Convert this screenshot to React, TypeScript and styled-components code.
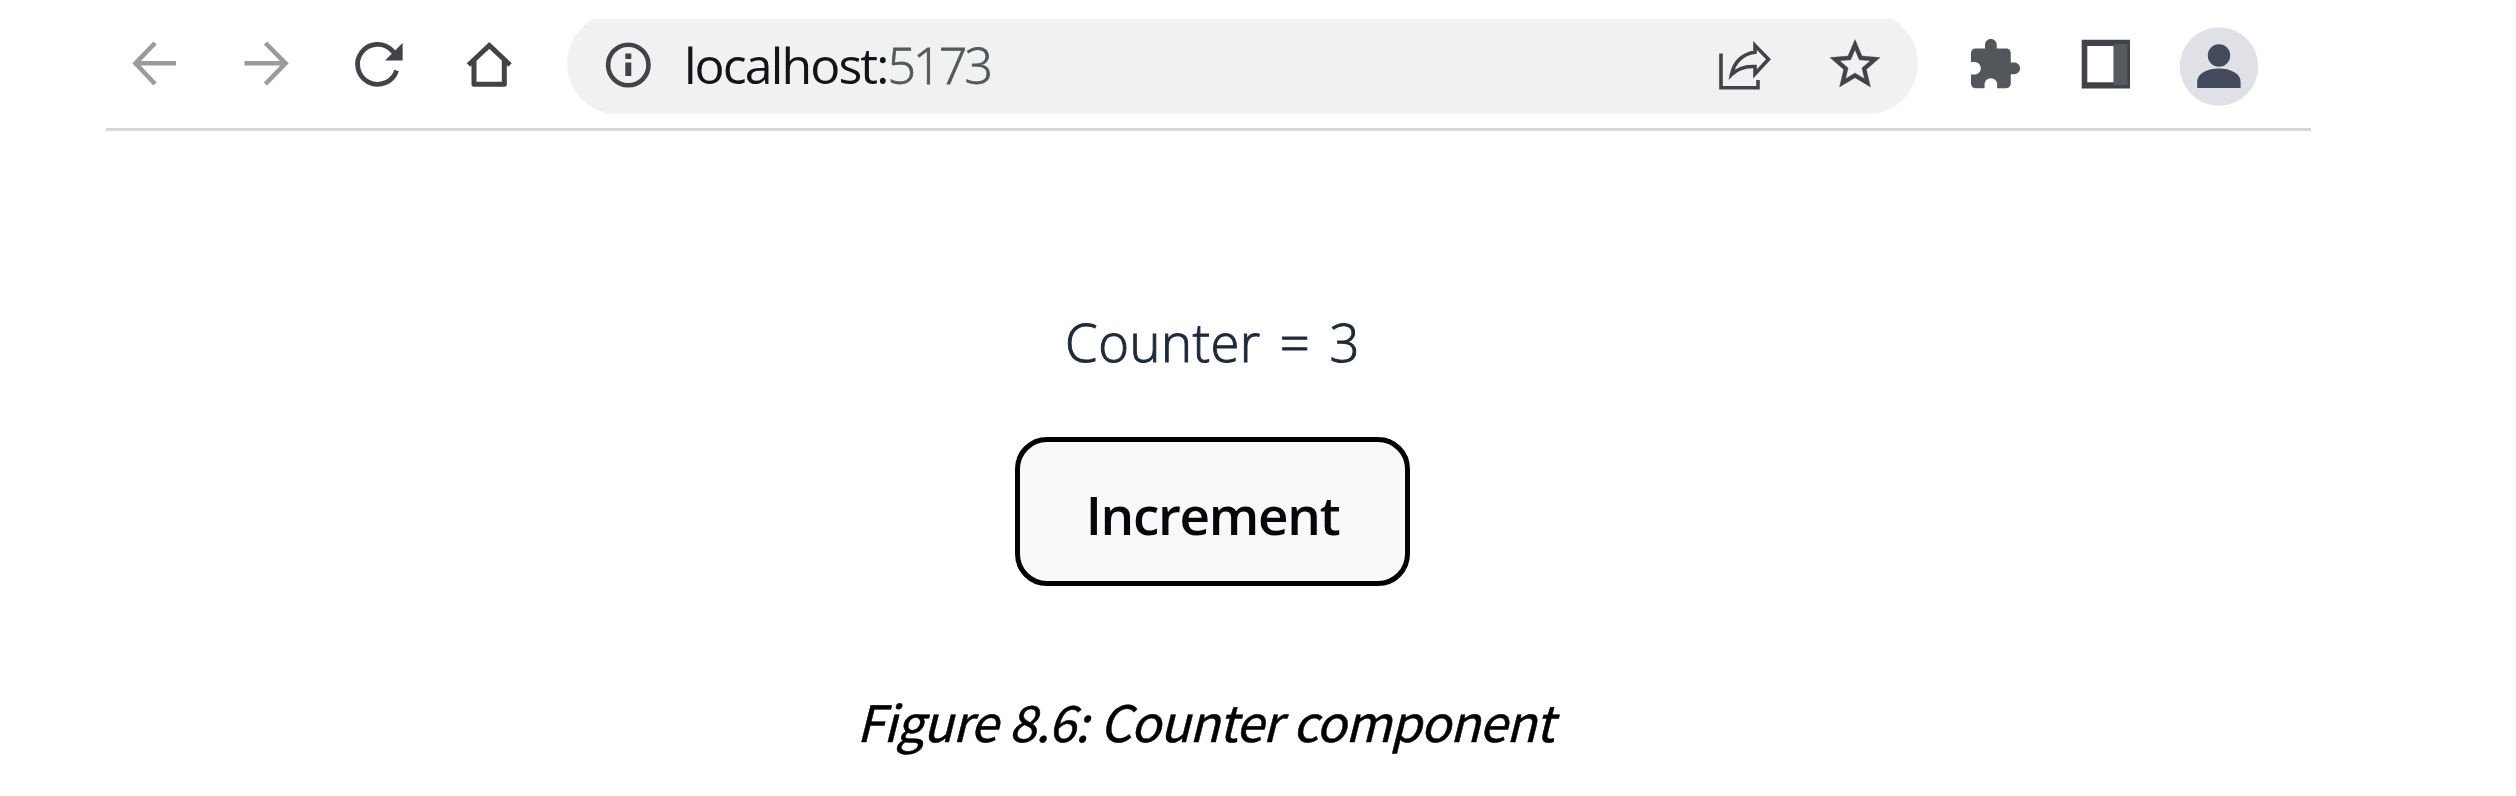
import React from "react";
import styled, { createGlobalStyle } from "styled-components";

const GlobalStyle = createGlobalStyle`
  * { box-sizing: border-box; }
  body { margin: 0; background: #fff; }
`;

const Page = styled.main`
  width: 2516px;
  height: 796px;
  padding: 19px 205px 0 106px;
  overflow: hidden;
  background: #fff;
`;

const Toolbar = styled.header`
  display: flex;
  align-items: flex-start;
  height: 112px;
  padding-left: 22px;
  border-bottom: 3px solid #d5d6d7;
  overflow: hidden;
`;

const IconGroup = styled.div<{ $left?: number }>`
  display: flex;
  align-items: center;
  gap: 57.3px;
  height: 92px;
  margin-left: ${({ $left = 0 }) => $left}px;
`;

const Icon = styled.svg.attrs({ width: 54, height: 54, viewBox: "0 0 54 54" })<{ $color?: string }>`
  display: block;
  flex: none;
  color: ${({ $color = "#414348" }) => $color};
  fill: none;
  stroke-linejoin: miter;
`;

const AddressBar = styled.div`
  display: flex;
  align-items: center;
  flex: none;
  width: 1351px;
  height: 101px;
  margin: -6px 0 0 51px;
  padding: 2px 36px 0 34px;
  border-radius: 51px;
  background: #f0f2f2;
`;

const Url = styled.span`
  flex: 1;
  margin-left: 29px;
  font: 300 50px/70px "Open Sans", "Noto Sans", sans-serif;
  color: #131418;
  white-space: nowrap;
`;

const Host = styled.span`
  font-weight: 400;
  letter-spacing: -1.9px;
`;

const Port = styled.span`
  color: #55585c;
  letter-spacing: -2.9px;
  -webkit-text-stroke: 0.8px #55585c;
`;

const Avatar = styled.svg.attrs({ width: 80, height: 80, viewBox: "0 0 80 80" })`
  flex: none;
  margin: 8px 0 0 46px;
`;

const Content = styled.section`
  display: flex;
  flex-direction: column;
  align-items: center;
  padding-left: 8px;
`;

const Count = styled.p`
  margin: 174px 0 0;
  font: 300 52.5px/74px "Open Sans", "Noto Sans", sans-serif;
  letter-spacing: 0.5px;
  word-spacing: 5px;
  color: #1d2a3a;
  -webkit-text-stroke: 1px #1d2a3a;
  white-space: nowrap;
`;

const IncrementButton = styled.button`
  width: 395px;
  height: 149px;
  margin-top: 58px;
  padding: 7px 0 0;
  border: 5px solid #000;
  border-radius: 32px;
  background: #f9f9f9;
  font: 600 53px/70px "Open Sans", "Noto Sans", sans-serif;
  letter-spacing: -1.3px;
  color: #06070a;
`;

const Caption = styled.p`
  margin: 97px 7px 0 0;
  font: italic 400 50px/74px "Noto Sans CJK SC", sans-serif;
  letter-spacing: -1px;
  word-spacing: 1.5px;
  -webkit-text-stroke: 0.5px #000;
  color: #000;
  text-align: center;
  white-space: nowrap;
`;

export default function App() {
  const [count, setCount] = React.useState(3);
  return (
    <>
      <GlobalStyle />
      <Page>
        <Toolbar>
          <IconGroup>
            <Icon $color="#9b9b9d" stroke="currentColor" strokeWidth="4.6">
              <path d="M27 5 7.5 25.3 27 46M7.5 25.3H48" />
            </Icon>
            <Icon $color="#9b9b9d" stroke="currentColor" strokeWidth="4.6">
              <path d="M26.5 5 46.5 25.3 26.5 46M46.5 25.3H5.5" />
            </Icon>
            <Icon>
              <path d="M45.6 32.5A20 20 0 1 1 41 12.5L45 17" stroke="currentColor" strokeWidth="4.8" />
              <path d="M51.6 5V22.5H34Z" fill="currentColor" />
            </Icon>
            <Icon stroke="currentColor" strokeWidth="5">
              <path d="M6.5 27 27.3 7.5 48 27" />
              <path d="M12 23V46.2H42.3V23" strokeLinejoin="round" />
            </Icon>
          </IconGroup>
          <AddressBar>
            <Icon>
              <circle cx="27.3" cy="27" r="20.2" stroke="currentColor" strokeWidth="4.6" />
              <path d="M24.3 15.5h6v5.5h-6zM24.3 24.5h6V38h-6z" fill="currentColor" />
            </Icon>
            <Url>
              <Host>localhost:</Host>
              <Port>5173</Port>
            </Url>
            <IconGroup>
              <Icon stroke="currentColor" strokeWidth="3.6">
                <path d="M4 15.5V49.7H41V42" />
                <path d="M38 7.5 51.5 21.3 38 36V28.5C29 28 21 30 14.5 36.5 17 24 26 15.5 38 14.2Z" />
              </Icon>
              <Icon>
                <path
                  transform="translate(-3 -3.5) scale(2.5)"
                  fill="currentColor"
                  stroke="currentColor"
                  strokeWidth="0.15"
                  d="M22 9.24l-7.19-.62L12 2 9.19 8.63 2 9.24l5.46 4.73L5.82 21 12 17.27 18.18 21l-1.63-7.03L22 9.24zM12 15.4l-3.76 2.27 1-4.28-3.32-2.88 4.38-.38L12 6.1l1.71 4.04 4.38.38-3.32 2.88 1 4.28L12 15.4z"
                />
              </Icon>
            </IconGroup>
          </AddressBar>
          <IconGroup $left={50}>
            <Icon $color="#53565a">
              <path
                transform="translate(-1.7 -1.3) scale(2.34)"
                fill="currentColor"
                d="M20.5 11H19V7c0-1.1-.9-2-2-2h-4V3.5C13 2.12 11.88 1 10.5 1S8 2.12 8 3.5V5H4c-1.1 0-1.99.9-1.99 2v3.8H3.5c1.49 0 2.7 1.21 2.7 2.7s-1.21 2.7-2.7 2.7H2V20c0 1.1.9 2 2 2h3.8v-1.5c0-1.49 1.21-2.7 2.7-2.7 1.49 0 2.7 1.21 2.7 2.7V22H17c1.1 0 2-.9 2-2v-4h1.5c1.38 0 2.5-1.12 2.5-2.5S21.88 11 20.5 11z"
              />
            </Icon>
            <Icon>
              <path d="M2.7 1.7H51V50.5H2.7Z" fill="currentColor" />
              <path d="M35 6H48.5V47H35Z" fill="#575a5e" />
              <path d="M8.3 8H34.5V44.3H8.3Z" fill="#fff" />
            </Icon>
          </IconGroup>
          <Avatar>
            <circle cx="40" cy="39.5" r="39.3" fill="#dfe1e7" />
            <circle cx="40" cy="28.5" r="11.2" fill="#424a5c" />
            <path d="M18.2 61V55C18.2 46 29 41.5 40 41.5S61.6 46 61.6 55V61Z" fill="#424a5c" />
          </Avatar>
        </Toolbar>
        <Content>
          <Count>Counter = {count}</Count>
          <IncrementButton onClick={() => setCount(count + 1)}>Increment</IncrementButton>
        </Content>
        <Caption>Figure 8.6: Counter component</Caption>
      </Page>
    </>
  );
}
